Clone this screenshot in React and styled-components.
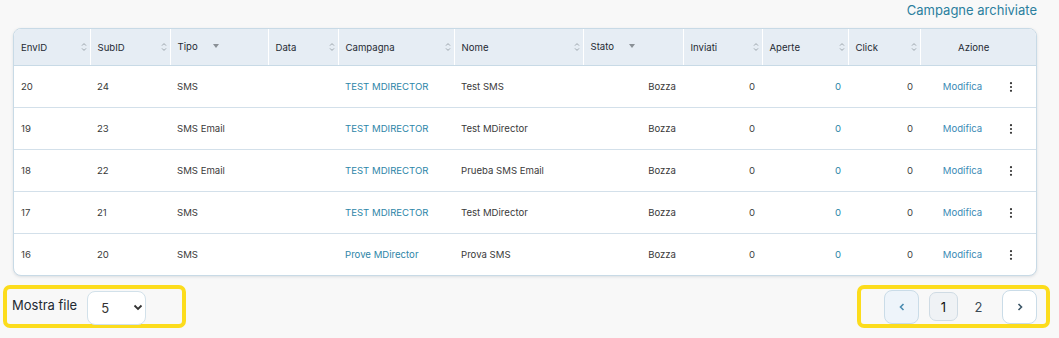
import React from "react";
import styled, { createGlobalStyle } from "styled-components";

const GlobalStyle = createGlobalStyle`
    body {
        margin: 0;
        background: #f8f8f8;
        font-family: Inter, "Noto Sans", sans-serif;
        color: #222;
    }
`;

const columns = [
    { key: "env", label: "EnvID", width: 76, sort: true },
    { key: "sub", label: "SubID", width: 80, sort: true },
    { key: "tipo", label: "Tipo", width: 98, filter: true },
    { key: "data", label: "Data", width: 70, sort: true },
    { key: "campagna", label: "Campagna", width: 116, sort: true },
    { key: "nome", label: "Nome", width: 129, sort: true },
    { key: "stato", label: "Stato", width: 100, filter: true },
    { key: "inviati", label: "Inviati", width: 79, sort: true },
    { key: "aperte", label: "Aperte", width: 86, sort: true },
    { key: "click", label: "Click", width: 72, sort: true },
    { key: "azione", label: "Azione", width: 116 },
];

const rows = [
    { env: 20, sub: 24, tipo: "SMS", campagna: "TEST MDIRECTOR", nome: "Test SMS" },
    { env: 19, sub: 23, tipo: "SMS Email", campagna: "TEST MDIRECTOR", nome: "Test MDirector" },
    { env: 18, sub: 22, tipo: "SMS Email", campagna: "TEST MDIRECTOR", nome: "Prueba SMS Email" },
    { env: 17, sub: 21, tipo: "SMS", campagna: "TEST MDIRECTOR", nome: "Test MDirector" },
    { env: 16, sub: 20, tipo: "SMS", campagna: "Prove MDirector", nome: "Prova SMS" },
];

const SortIcon = () => (
    <svg width="6" height="10" viewBox="0 0 6 10">
        <path d="M1 3.6 L3 1.6 L5 3.6 M1 6.4 L3 8.4 L5 6.4" fill="none" stroke="#9aa3aa" strokeWidth="1" />
    </svg>
);

const Caret = () => (
    <svg width="6" height="4" viewBox="0 0 6 4">
        <path d="M0 0 H6 L3 4 Z" fill="#8a9096" />
    </svg>
);

const Kebab = () => (
    <svg width="4" height="12" viewBox="0 0 4 12">
        <circle cx="2" cy="2.2" r="1.1" fill="#333" />
        <circle cx="2" cy="6" r="1.1" fill="#333" />
        <circle cx="2" cy="9.8" r="1.1" fill="#333" />
    </svg>
);

const Chevron = ({ dir, color }) => (
    <svg width="6" height="8" viewBox="0 0 6 8">
        <path
            d={dir === "left" ? "M4.5 1 L1.5 4 L4.5 7" : "M1.5 1 L4.5 4 L1.5 7"}
            fill="none"
            stroke={color}
            strokeWidth="1.6"
        />
    </svg>
);

const SelectChevron = () => (
    <svg width="10" height="7" viewBox="0 0 10 7">
        <path d="M1.5 1.5 L5 5 L8.5 1.5" fill="none" stroke="#333" strokeWidth="1.8" />
    </svg>
);

export default function App() {
    return (
        <>
            <GlobalStyle />
            <Page>
                <Content>
                    <TopBar>
                        <Link>Campagne archiviate</Link>
                    </TopBar>
                    <Card>
                        <Table>
                            <colgroup>
                                {columns.map(c => (
                                    <col key={c.key} style={{ width: c.width }} />
                                ))}
                            </colgroup>
                            <thead>
                                <tr>
                                    {columns.map(c => (
                                        <Th key={c.key} $center={c.key === "azione"}>
                                            {c.key === "azione" ? (
                                                c.label
                                            ) : (
                                                <HeadInner $filter={c.filter}>
                                                    <span>{c.label}</span>
                                                    {c.sort ? <SortIcon /> : null}
                                                    {c.filter ? <Caret /> : null}
                                                </HeadInner>
                                            )}
                                        </Th>
                                    ))}
                                </tr>
                            </thead>
                            <tbody>
                                {rows.map(r => (
                                    <tr key={r.env}>
                                        <Td>{r.env}</Td>
                                        <Td>{r.sub}</Td>
                                        <Td>{r.tipo}</Td>
                                        <Td></Td>
                                        <Td $tone="link">{r.campagna}</Td>
                                        <Td>{r.nome}</Td>
                                        <Td $right>Bozza</Td>
                                        <Td $right $tone="muted">0</Td>
                                        <Td $right $tone="link">0</Td>
                                        <Td $right $tone="muted">0</Td>
                                        <Td>
                                            <Actions>
                                                <ActionLink>Modifica</ActionLink>
                                                <Kebab />
                                            </Actions>
                                        </Td>
                                    </tr>
                                ))}
                            </tbody>
                        </Table>
                    </Card>
                </Content>
                <Footer>
                    <Highlight $width={183}>
                        <RowsLabel>Mostra file</RowsLabel>
                        <Select>
                            <span>5</span>
                            <SelectChevron />
                        </Select>
                    </Highlight>
                    <Highlight $width={193} $end>
                        <PageButton $variant="prev">
                            <Chevron dir="left" color="#4a8bb0" />
                        </PageButton>
                        <PageNumber $active>1</PageNumber>
                        <PageNumber>2</PageNumber>
                        <PageButton $variant="next">
                            <Chevron dir="right" color="#3b5566" />
                        </PageButton>
                    </Highlight>
                </Footer>
            </Page>
        </>
    );
}

const toneColor = {
    link: "#2e86a8",
    muted: "#444",
};

const Page = styled.div`
    width: 1059px;
    min-height: 338px;
`;

const Content = styled.div`
    padding: 0 22px 0 13px;
`;

const TopBar = styled.div`
    display: flex;
    justify-content: flex-end;
    height: 20px;
    margin-bottom: 8px;
    align-items: center;
`;

const Link = styled.a`
    font-size: 13px;
    color: #2b7f9e;
    text-decoration: none;
    line-height: 20px;
`;

const Card = styled.div`
    border: 1px solid #c8dae6;
    border-radius: 8px;
    overflow: hidden;
    background: #fff;
    box-shadow: 0 1px 3px rgba(60, 80, 100, 0.15);
`;

const Table = styled.table`
    width: 100%;
    border-collapse: collapse;
    table-layout: fixed;
    font-size: 9.6px;
`;

const Th = styled.th`
    height: 36px;
    padding: 0 3px 0 7px;
    background: #e6edf4;
    border-right: 1px solid #fff;
    border-bottom: 1px solid #c8dae6;
    font-weight: 400;
    color: #1f2a33;
    text-align: ${p => (p.$center ? "center" : "left")};
    padding-right: ${p => (p.$center ? "16px" : "3px")};
    &:last-child {
        border-right: none;
    }
`;

const HeadInner = styled.div`
    display: flex;
    align-items: center;
    justify-content: ${p => (p.$filter ? "flex-start" : "space-between")};
    gap: 15px;
    margin-top: ${p => (p.$filter ? "-2px" : "0")};
`;

const Td = styled.td`
    height: 41px;
    padding: 0 7px;
    border-bottom: 1px solid #d3e0ea;
    color: ${p => toneColor[p.$tone] || "#3a3a3a"};
    text-align: ${p => (p.$right ? "right" : "left")};
    white-space: nowrap;
    tr:last-child & {
        border-bottom: none;
    }
`;

const Actions = styled.div`
    display: flex;
    align-items: center;
    justify-content: center;
    gap: 27px;
`;

const ActionLink = styled.span`
    color: #3a8ab5;
`;

const Footer = styled.div`
    display: flex;
    justify-content: space-between;
    padding: 9px 9px 0 3px;
`;

const Highlight = styled.div`
    box-sizing: border-box;
    width: ${p => p.$width}px;
    height: 43px;
    border: 4px solid #fcdc1c;
    border-radius: 7px;
    display: flex;
    align-items: center;
    justify-content: ${p => (p.$end ? "flex-end" : "flex-start")};
    padding: ${p => (p.$end ? "0 9px 0 0" : "0 0 0 5px")};
    gap: ${p => (p.$end ? "6px" : "10px")};
`;

const RowsLabel = styled.span`
    font-size: 13px;
    color: #1e2a33;
    margin-top: -3px;
`;

const Select = styled.div`
    box-sizing: border-box;
    width: 59px;
    height: 34px;
    border: 1px solid #d2e1ea;
    border-radius: 8px;
    background: #fff;
    display: flex;
    align-items: center;
    justify-content: space-between;
    padding: 0 2px 0 13px;
    font-size: 13px;
    color: #333;
    margin-top: 2px;
`;

const PageButton = styled.div`
    box-sizing: border-box;
    width: 35px;
    height: 34px;
    border-radius: 8px;
    border: 1px solid #cadce8;
    background: ${p => (p.$variant === "prev" ? "#eef4fa" : "#fff")};
    display: flex;
    align-items: center;
    justify-content: center;
    margin: 0 ${p => (p.$variant === "prev" ? "4px" : "0")} 0 ${p => (p.$variant === "next" ? "3px" : "0")};
`;

const PageNumber = styled.div`
    box-sizing: border-box;
    width: 29px;
    height: 29px;
    border-radius: 7px;
    border: 1px solid ${p => (p.$active ? "#cfdbe4" : "transparent")};
    background: ${p => (p.$active ? "#eff2f5" : "transparent")};
    display: flex;
    align-items: center;
    justify-content: center;
    font-size: 13px;
    color: ${p => (p.$active ? "#111" : "#3c4a55")};
`;
